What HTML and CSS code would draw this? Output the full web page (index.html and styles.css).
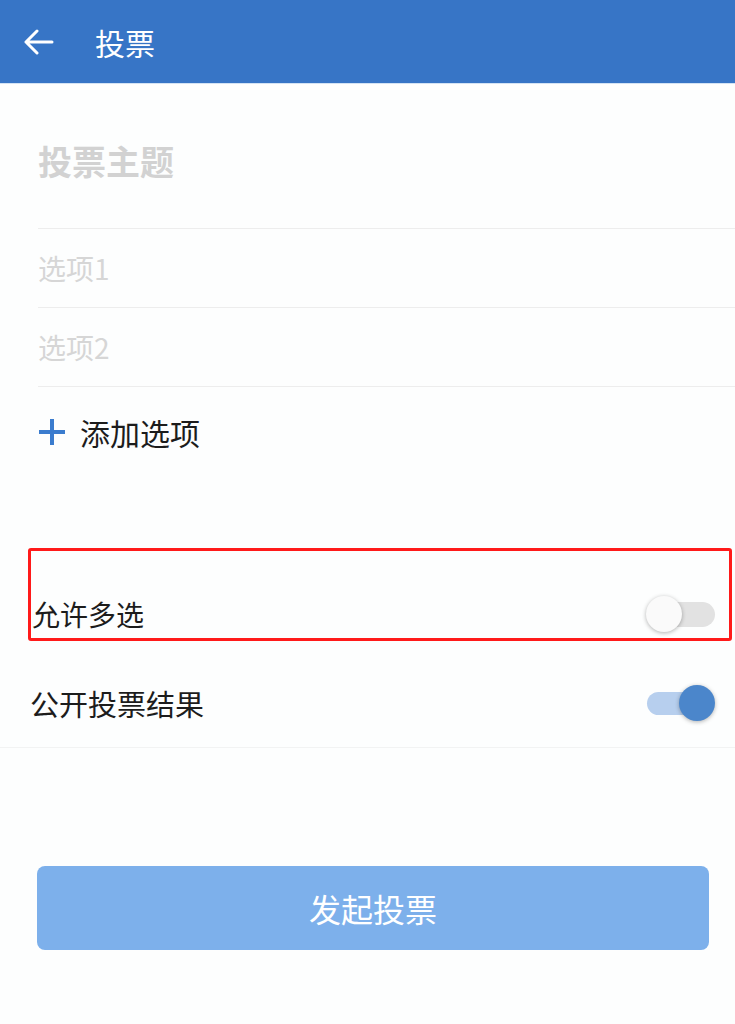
FILE: index.html
```html
<!DOCTYPE html>
<html lang="zh-CN">
<head>
    <meta charset="UTF-8">
    <meta name="viewport" content="width=device-width, initial-scale=1.0">
    <title>投票</title>
    <link rel="stylesheet" href="styles.css">
</head>
<body>
    <header class="topbar">
        <svg class="back" width="30" height="26" viewBox="0 0 30 26">
            <path d="M2 13H28M13 2L2 13L13 24" fill="none" stroke="#fff" stroke-width="3" stroke-linecap="round" stroke-linejoin="round"/>
        </svg>
        <h1 class="title">投票</h1>
    </header>

    <div class="form">
        <div class="subject">投票主题</div>
        <div class="option">选项1</div>
        <div class="option">选项2</div>
        <div class="add-option">
            <svg class="plus" width="28" height="28" viewBox="0 0 28 28">
                <path d="M14 1V27M1 14H27" stroke="#3b7cce" stroke-width="4"/>
            </svg>
            <span>添加选项</span>
        </div>
    </div>

    <div class="settings">
        <div class="highlight">
            <div class="setting">
                <span>允许多选</span>
                <div class="switch"><div class="knob"></div></div>
            </div>
        </div>
        <div class="setting setting-last">
            <span>公开投票结果</span>
            <div class="switch on"><div class="knob"></div></div>
        </div>
    </div>

    <button class="submit">发起投票</button>
</body>
</html>
```

FILE: styles.css
```css
body {
    margin: 0;
    background-color: #fdfefe;
    font-family: "Noto Sans CJK SC", "Noto Sans", sans-serif;
}
.topbar {
    height: 83px;
    background-color: #3775c6;
    border-bottom: 1px solid #d3e3f4;
    display: flex;
    align-items: center;
    padding-left: 24px;
}
.back {
    display: block;
}
.title {
    margin: 0 0 0 41px;
    color: white;
    font-size: 30px;
    font-weight: normal;
    line-height: 40px;
}
.form {
    margin-left: 38px;
}
.subject {
    font-size: 34px;
    font-weight: bold;
    color: #d2d2d2;
    line-height: 40px;
    padding: 57px 0 47px;
    border-bottom: 1px solid #ededed;
}
.option {
    font-size: 28px;
    color: #d6d6d6;
    line-height: 36px;
    padding: 21px 0;
    border-bottom: 1px solid #ededed;
}
.add-option {
    display: flex;
    align-items: center;
    padding-top: 25px;
    font-size: 30px;
    line-height: 40px;
    color: #1c1c1c;
}
.plus {
    margin-right: 14px;
}
.settings {
    margin-top: 96px;
    border-bottom: 1px solid #f2f3f3;
}
.highlight {
    margin: 0 3px 0 28px;
    border: 3px solid #ff1a1a;
    border-radius: 3px;
}
.setting {
    display: flex;
    align-items: center;
    justify-content: space-between;
    height: 46px;
    padding: 40px 14px 1px 1px;
    font-size: 28px;
    color: #1c1c1c;
}
.setting-last {
    height: 88px;
    padding: 18px 20px 0 30px;
    font-size: 29px;
}
.switch {
    position: relative;
    width: 64px;
    height: 25px;
    border-radius: 13px;
    background-color: #e2e2e2;
}
.knob {
    position: absolute;
    top: -6px;
    left: -5px;
    width: 36px;
    height: 36px;
    border-radius: 50%;
    background-color: #fafafa;
    box-shadow: 0 1px 4px rgba(0, 0, 0, 0.3);
}
.switch.on {
    width: 54px;
    height: 23px;
    margin-right: 14px;
    background-color: #b7cfee;
}
.switch.on .knob {
    left: auto;
    right: -14px;
    top: -7px;
    background-color: #4b86cb;
}
.submit {
    display: block;
    width: 672px;
    height: 84px;
    margin: 118px 0 0 37px;
    border: none;
    border-radius: 8px;
    background-color: #7db0eb;
    color: white;
    font-family: "Noto Sans CJK SC", sans-serif;
    font-size: 32px;
}
```
